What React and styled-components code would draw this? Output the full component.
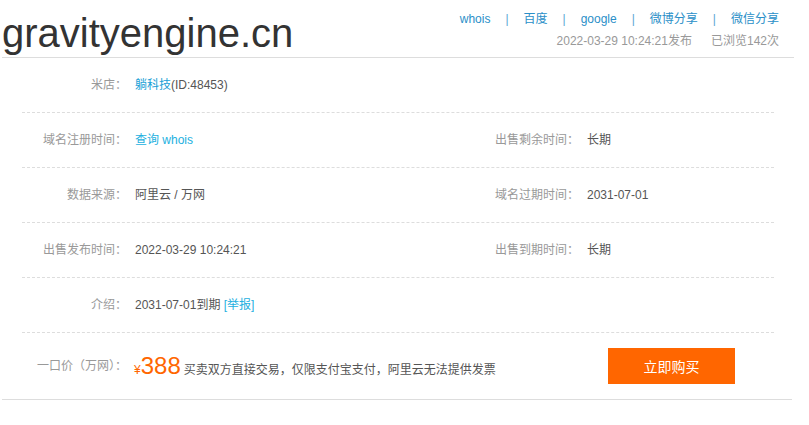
import React from "react";
import styled, { createGlobalStyle } from "styled-components";

const GlobalStyle = createGlobalStyle`
  * { box-sizing: border-box; }
  body {
    margin: 0;
    background: #fff;
    font-family: "Liberation Sans", Arial, "Noto Sans CJK SC", sans-serif;
    font-size: 12px;
    color: #555;
  }
  a { text-decoration: none; }
`;

const Page = styled.div`
  width: 792px;
  margin-left: 2px;
`;

const Header = styled.header`
  height: 58px;
  display: flex;
  justify-content: space-between;
  align-items: flex-start;
  border-bottom: 1px solid #ddd;
`;

const Title = styled.h1`
  margin: 0;
  padding-top: 10px;
  font-size: 40px;
  line-height: 46px;
  font-weight: normal;
  color: #333;
`;

const HeaderInfo = styled.div`
  padding-top: 8px;
  padding-right: 15px;
  text-align: right;
  line-height: 22px;
`;

const ShareBar = styled.div`
  display: flex;
  justify-content: flex-end;
`;

const ShareLink = styled.a`
  color: #2a8fc8;
`;

const Sep = styled.span`
  color: #5aa7d4;
  margin: 0 15px;
`;

const Meta = styled.div`
  color: #999;
  display: flex;
  justify-content: flex-end;
  gap: 19px;
`;

const Details = styled.div`
  margin: 0 20px;
`;

const Row = styled.div`
  display: grid;
  grid-template-columns: 105px 347px 105px 1fr;
  align-items: center;
  height: 55px;
  border-bottom: 1px dashed #ddd;
`;

const Label = styled.div`
  text-align: right;
  color: #999;
  line-height: 18px;
  height: 18px;
`;

const Value = styled.div`
  padding-left: 8px;
  color: #555;
  line-height: 18px;
  height: 18px;
`;

const Link = styled.a`
  color: ${(p) => (p.$light ? "#23b0e0" : "#1b9fd6")};
`;

const PriceRow = styled.div`
  display: flex;
  align-items: center;
  height: 67px;
  margin-left: -20px;
  margin-right: -18px;
  padding-left: 20px;
  border-bottom: 1px solid #ddd;
`;

const PriceLabel = styled(Label)`
  width: 105px;
  flex-shrink: 0;
`;

const Price = styled.div`
  display: flex;
  align-items: baseline;
  padding-left: 7px;
  color: #555;
  width: 481px;
`;

const Yen = styled.span`
  color: #ff6600;
  font-size: 12px;
`;

const Amount = styled.span`
  color: #ff6600;
  font-size: 24px;
  margin-right: 3px;
`;

const BuyButton = styled.button`
  width: 127px;
  height: 36px;
  border: none;
  background: #ff6600;
  color: #fff;
  font-family: inherit;
  font-size: 14px;
  cursor: pointer;
`;

const rows = [
  [
    "米店：",
    <>
      <Link href="#">躺科技</Link>(ID:48453)
    </>,
    null,
    null,
  ],
  ["域名注册时间：", <Link $light href="#">查询 whois</Link>, "出售剩余时间：", "长期"],
  ["数据来源：", "阿里云 / 万网", "域名过期时间：", "2031-07-01"],
  ["出售发布时间：", "2022-03-29 10:24:21", "出售到期时间：", "长期"],
  [
    "介绍：",
    <>
      2031-07-01到期 <Link $light href="#">[举报]</Link>
    </>,
    null,
    null,
  ],
];

const shares = ["whois", "百度", "google", "微博分享", "微信分享"];

export default function App() {
  return (
    <Page>
      <GlobalStyle />
      <Header>
        <Title>gravityengine.cn</Title>
        <HeaderInfo>
          <ShareBar>
            {shares.map((s, i) => (
              <React.Fragment key={s}>
                {i > 0 && <Sep>|</Sep>}
                <ShareLink href="#">{s}</ShareLink>
              </React.Fragment>
            ))}
          </ShareBar>
          <Meta>
            <span>2022-03-29 10:24:21发布</span>
            <span>已浏览142次</span>
          </Meta>
        </HeaderInfo>
      </Header>
      <Details>
        {rows.map((r, i) => (
          <Row key={i}>
            <Label>{r[0]}</Label>
            <Value>{r[1]}</Value>
            {r[2] && <Label>{r[2]}</Label>}
            {r[3] && <Value>{r[3]}</Value>}
          </Row>
        ))}
        <PriceRow>
          <PriceLabel>一口价（万网）：</PriceLabel>
          <Price>
            <Yen>¥</Yen>
            <Amount>388</Amount>
            买卖双方直接交易，仅限支付宝支付，阿里云无法提供发票
          </Price>
          <BuyButton>立即购买</BuyButton>
        </PriceRow>
      </Details>
    </Page>
  );
}
